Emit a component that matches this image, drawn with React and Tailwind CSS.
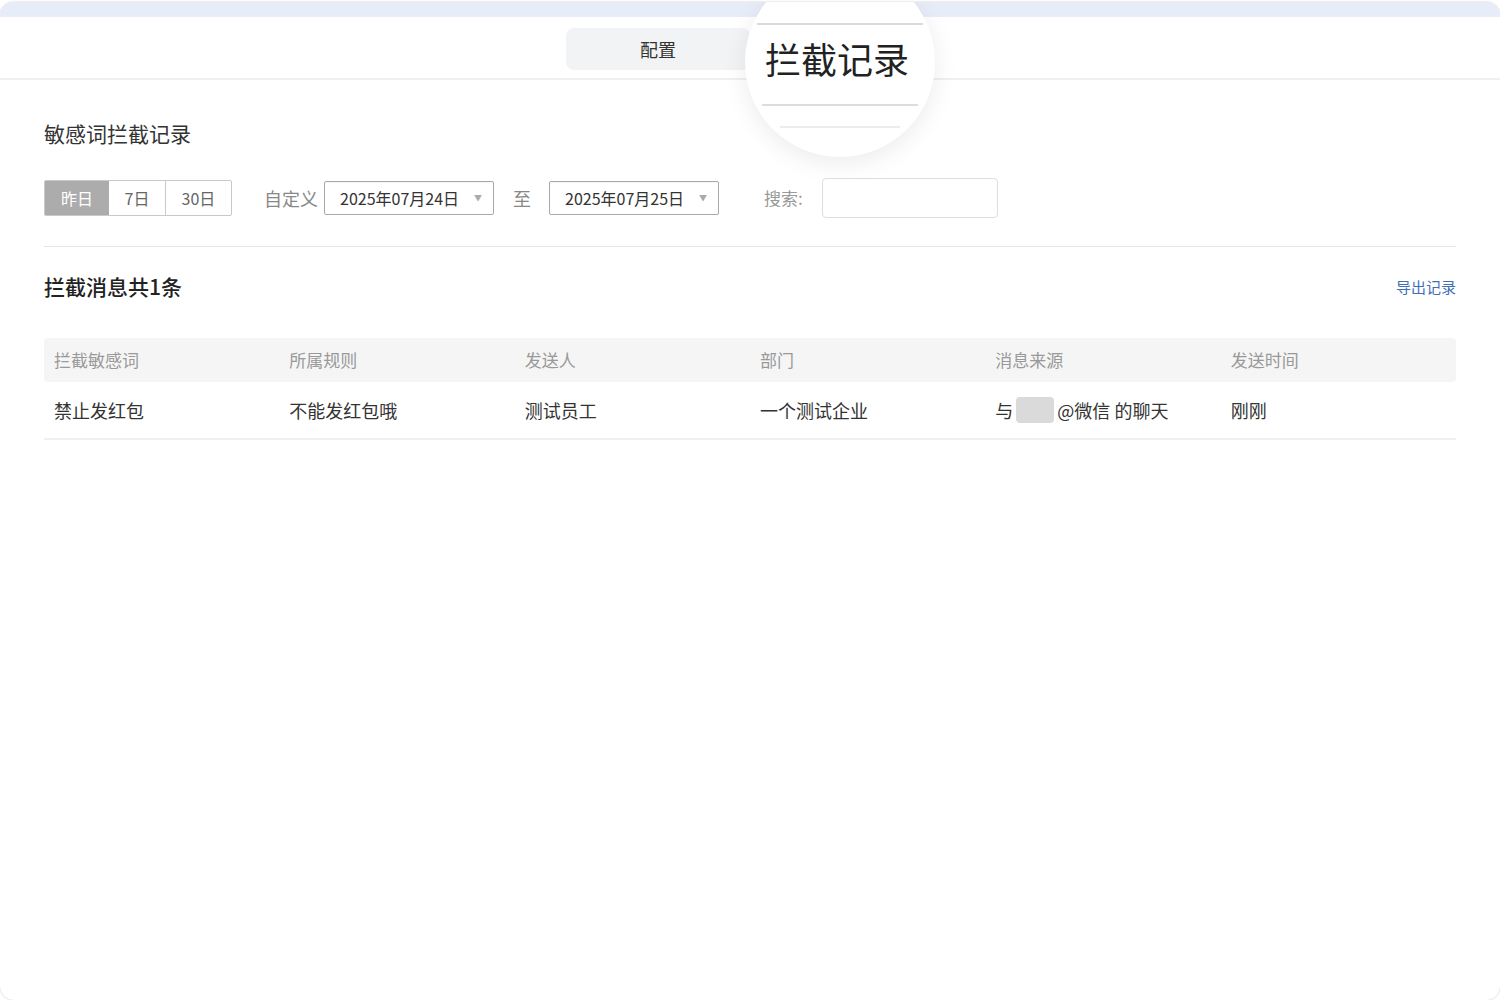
const font = { fontFamily: '"Noto Sans CJK SC", "Noto Sans", sans-serif' };

const columns = ['拦截敏感词', '所属规则', '发送人', '部门', '消息来源', '发送时间'];

const DateSelect = ({ value }) => (
  <div className="flex items-center justify-between w-[170px] h-[34px] border border-[#a9a9a9] rounded-[2px] pl-[15px] pr-[11px] bg-white shadow-[inset_0_1px_1px_rgba(0,0,0,0.04)]">
    <span className="text-[16px] text-[#333]">{value}</span>
    <span className="text-[8px] text-[#aaa]">▼</span>
  </div>
);

const Magnifier = () => (
  <div className="absolute left-[745px] top-[-35px] w-[190px] h-[190px] rounded-full bg-white shadow-[0_6px_24px_rgba(0,0,0,0.08)] overflow-hidden">
    <div className="absolute left-[12px] top-[56px] w-[166px] h-[2px] bg-[#dadada]" />
    <div className="absolute left-[20px] top-[67px] text-[36px] leading-[48px] text-[#222] whitespace-nowrap">拦截记录</div>
    <div className="absolute left-[17px] top-[137px] w-[156px] h-[2px] bg-[#dcdcdc]" />
    <div className="absolute left-[35px] top-[159px] w-[120px] h-[2px] bg-[#ececec]" />
  </div>
);

export default function App() {
  return (
    <div className="w-[1500px] h-[1000px] bg-white pt-[2px]" style={font}>
      <div className="relative h-[998px] rounded-[14px] bg-white overflow-hidden shadow-[0_0_2px_rgba(0,0,0,0.25)]">
        <div className="h-[15px] bg-[#e7edf8]" />

        {/* tabs, the second one sits under the magnifier */}
        <div className="relative h-[63px] border-b-2 border-[#f0f0f0] flex justify-center pt-[11px]">
          <div className="flex">
            <div className="w-[184px] h-[42px] rounded-[8px] bg-[#f2f3f4] flex items-center justify-center text-[18px] text-[#333]">
              配置
            </div>
            <div className="w-[184px] h-[42px]" />
          </div>
        </div>

        <div className="px-[44px] pt-[39px]">
          <h2 className="text-[21px] leading-[28px] text-[#333]">敏感词拦截记录</h2>

          {/* filters */}
          <div className="mt-[31px] flex items-center h-[40px]">
            <div className="flex h-[36px] border border-[#c9c9c9] rounded-[2px] text-[16px]">
              <div className="w-[64px] flex items-center justify-center bg-[#acacac] text-white">昨日</div>
              <div className="w-[57px] flex items-center justify-center text-[#666] border-r border-[#c9c9c9]">7日</div>
              <div className="w-[65px] flex items-center justify-center text-[#666]">30日</div>
            </div>
            <span className="ml-[32px] mr-[6px] text-[18px] text-[#888]">自定义</span>
            <DateSelect value="2025年07月24日" />
            <span className="ml-[19px] mr-[18px] text-[18px] text-[#888]">至</span>
            <DateSelect value="2025年07月25日" />
            <span className="ml-[45px] mr-[19px] text-[17px] text-[#999]">搜索:</span>
            <div className="w-[176px] h-[40px] border border-[#dedede] rounded-[4px] bg-white" />
          </div>

          <div className="mt-[28px] border-t border-[#e6e6e6]" />

          <div className="mt-[25px] flex items-center justify-between h-[28px]">
            <h3 className="text-[21px] leading-[28px] text-[#222] font-medium">拦截消息共1条</h3>
            <a className="mt-[2px] text-[15px] text-[#3f6fb5] cursor-pointer">导出记录</a>
          </div>

          {/* table */}
          <div className="mt-[38px]">
            <div className="grid grid-cols-6 h-[44px] items-center bg-[#f5f5f5] rounded-[4px] text-[17px] text-[#999]">
              {columns.map((c) => (
                <div key={c} className="pl-[10px]">{c}</div>
              ))}
            </div>
            <div className="grid grid-cols-6 h-[58px] items-center border-b-2 border-[#f0f0f0] text-[18px] text-[#333]">
              <div className="pl-[10px]">禁止发红包</div>
              <div className="pl-[10px]">不能发红包哦</div>
              <div className="pl-[10px]">测试员工</div>
              <div className="pl-[10px]">一个测试企业</div>
              <div className="pl-[10px] flex items-center">
                与
                <span className="inline-block w-[38px] h-[26px] mx-[3px] rounded-[4px] bg-[#dadada]" />
                @微信 的聊天
              </div>
              <div className="pl-[10px]">刚刚</div>
            </div>
          </div>
        </div>

        <Magnifier />
      </div>
    </div>
  );
}
